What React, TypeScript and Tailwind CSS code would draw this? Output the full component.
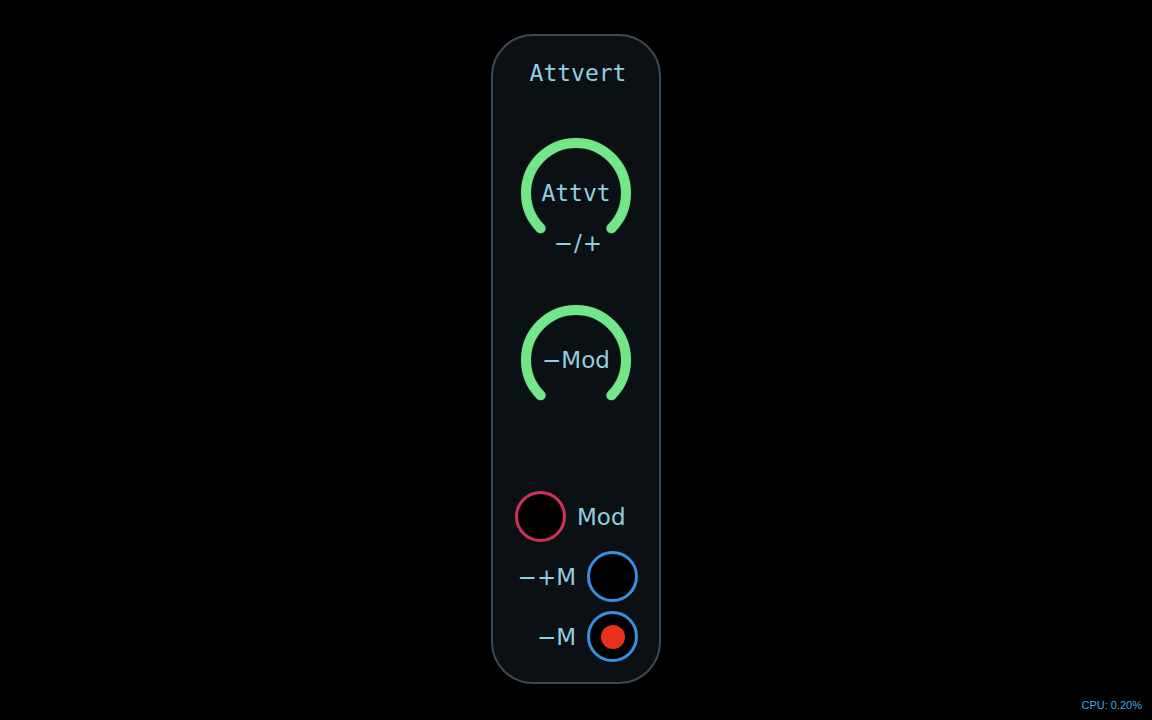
const MONO = "font-['DejaVu_Sans_Mono',monospace]";
const SANS = "font-['DejaVu_Sans',sans-serif]";

function Knob({ label, mono }: { label: string; mono?: boolean }) {
  return (
    <div className="relative h-[120px] w-[120px]">
      <svg width="120" height="120" viewBox="0 0 120 120">
        <path
          d="M 24.64 95.36 A 50 50 0 1 1 95.36 95.36"
          fill="none"
          stroke="#0f2418"
          strokeWidth="11.5"
          strokeLinecap="round"
        />
        <path
          d="M 24.64 95.36 A 50 50 0 1 1 95.36 95.36"
          fill="none"
          stroke="#72e688"
          strokeWidth="10"
          strokeLinecap="round"
        />
      </svg>
      <div
        className={`absolute inset-0 flex items-center justify-center text-[23px] leading-[28px] text-[#90cfe0] ${mono ? MONO : SANS}`}
      >
        {label}
      </div>
    </div>
  );
}

function Jack({ color, lit }: { color: string; lit?: boolean }) {
  return (
    <div
      className={`flex h-[51px] w-[51px] items-center justify-center rounded-full border-[3px] bg-black ${color}`}
    >
      {lit && <div className="h-[24px] w-[24px] rounded-full bg-[#e8321e]" />}
    </div>
  );
}

export default function App() {
  return (
    <div className="relative h-[720px] w-full overflow-hidden bg-black">
      <div className="mx-auto mt-[34px] flex h-[650px] w-[170px] flex-col items-center rounded-[42px] border-2 border-[#3a4a58] bg-[#0b1014]">
        <div className={`pl-[4px] pt-[23px] text-[23px] leading-[28px] text-[#90cfe0] ${MONO}`}>Attvert</div>

        <div className="mt-[46px]">
          <Knob label="Attvt" mono />
        </div>
        <div className={`-mt-[24px] pl-[5px] text-[23px] leading-[28px] tracking-[1px] text-[#90cfe0] ${SANS}`}>−/+</div>

        <div className="mt-[43px]">
          <Knob label="−Mod" />
        </div>

        <div className={`mt-[71px] flex w-full flex-col gap-[9px] text-[23px] leading-[28px] text-[#90cfe0] ${SANS}`}>
          <div className="flex items-center gap-[11px] pl-[22px]">
            <Jack color="border-[#d0305c]" />
            <span>Mod</span>
          </div>
          <div className="flex items-center justify-end gap-[11px] pr-[21px]">
            <span>−+M</span>
            <Jack color="border-[#3a8ee0]" />
          </div>
          <div className="flex items-center justify-end gap-[11px] pr-[21px]">
            <span>−M</span>
            <Jack color="border-[#3a8ee0]" lit />
          </div>
        </div>
      </div>

      <div className="absolute bottom-[7px] right-[10px] font-['Liberation_Sans',sans-serif] text-[11px] text-[#3aa8ec]">
        CPU: 0.20%
      </div>
    </div>
  );
}
